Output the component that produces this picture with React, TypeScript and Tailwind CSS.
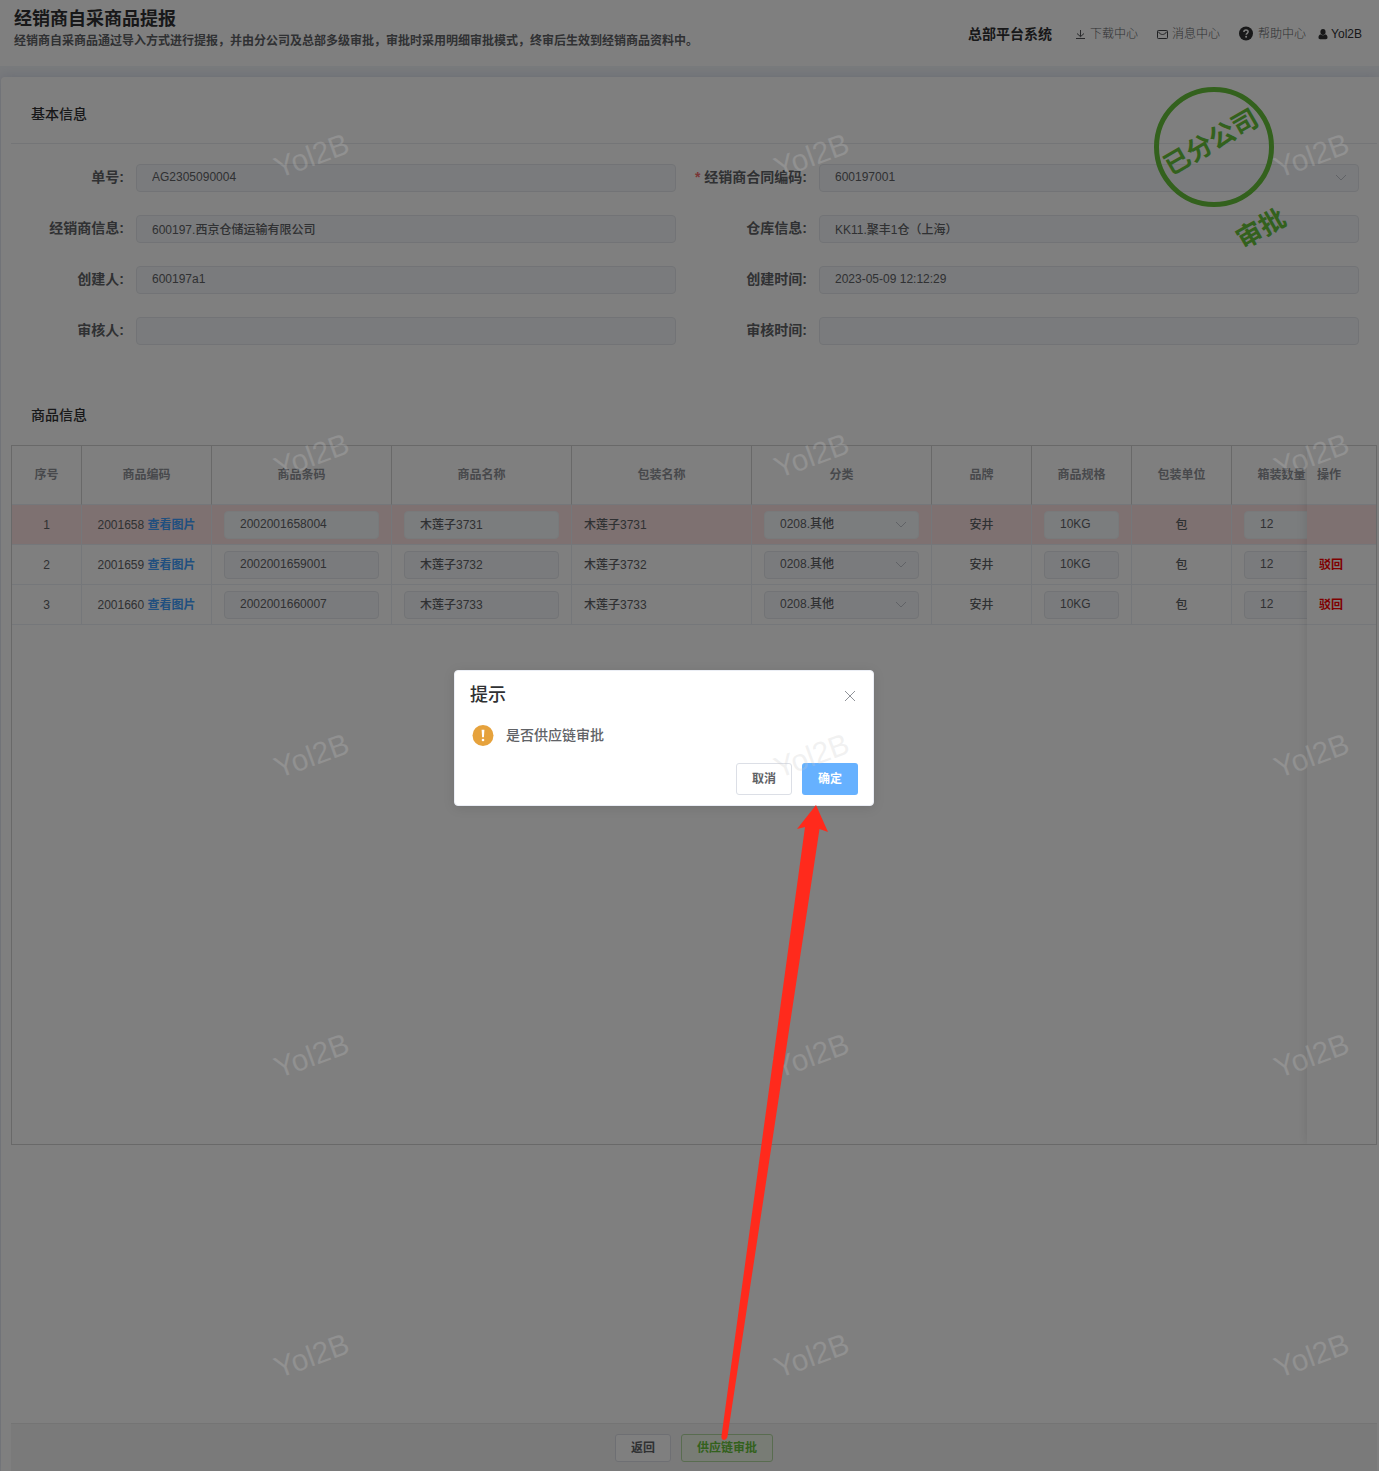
import type { ReactNode } from 'react';

interface FieldProps {
  id: string;
  label: string;
  value: string;
  required?: boolean;
  select?: boolean;
}

interface Product {
  no: number;
  code: string;
  barcode: string;
  name: string;
  category: string;
  brand: string;
  spec: string;
  unit: string;
  boxCount: string;
  rejected: boolean;
}

const fields: FieldProps[] = [
  { id: 'orderNo', label: '单号', value: 'AG2305090004' },
  { id: 'contract', label: '经销商合同编码', value: '600197001', required: true, select: true },
  { id: 'dealer', label: '经销商信息', value: '600197.西京仓储运输有限公司' },
  { id: 'warehouse', label: '仓库信息', value: 'KK11.聚丰1仓（上海）' },
  { id: 'creator', label: '创建人', value: '600197a1' },
  { id: 'createdAt', label: '创建时间', value: '2023-05-09 12:12:29' },
  { id: 'auditor', label: '审核人', value: '' },
  { id: 'auditedAt', label: '审核时间', value: '' },
];

const base = { category: '0208.其他', brand: '安井', spec: '10KG', unit: '包', boxCount: '12' };

const products: Product[] = [
  { ...base, no: 1, code: '2001658', barcode: '2002001658004', name: '木莲子3731', rejected: true },
  { ...base, no: 2, code: '2001659', barcode: '2002001659001', name: '木莲子3732', rejected: false },
  { ...base, no: 3, code: '2001660', barcode: '2002001660007', name: '木莲子3733', rejected: false },
];

const columns = [
  { title: '序号', width: 'w-[70px]' },
  { title: '商品编码', width: 'w-[130px]' },
  { title: '商品条码', width: 'w-[180px]' },
  { title: '商品名称', width: 'w-[180px]' },
  { title: '包装名称', width: 'w-[180px]' },
  { title: '分类', width: 'w-[180px]' },
  { title: '品牌', width: 'w-[100px]' },
  { title: '商品规格', width: 'w-[100px]' },
  { title: '包装单位', width: 'w-[100px]' },
  { title: '箱装数量', width: 'w-[100px]' },
];

function ChevronDown() {
  return (
    <svg
      viewBox="0 0 12 12"
      className="pointer-events-none absolute top-1/2 right-3 h-3 w-3 -translate-y-1/2"
      fill="none"
      stroke="#c0c4cc"
      strokeWidth="1"
    >
      <path d="M1 3 6 8 11 3" />
    </svg>
  );
}

function Field({ id, label, value, required, select }: FieldProps) {
  const control =
    'block h-7 w-full appearance-none rounded border border-[#e4e7ed] bg-[#f5f7fa] px-[15px] pb-0.5 text-xs font-medium text-[#606266]';
  return (
    <div className="flex items-center pr-[18px]">
      <label
        htmlFor={id}
        className="w-[125px] shrink-0 pr-3 pb-0.5 text-right text-sm font-bold whitespace-nowrap text-[#606266]"
      >
        {required && <span className="mr-1 text-[#f56c6c]">*</span>}
        {label}:
      </label>
      <div className="relative min-w-0 flex-1">
        {select ? (
          <>
            <select id={id} className={control} defaultValue={value}>
              <option>{value}</option>
            </select>
            <ChevronDown />
          </>
        ) : (
          <input id={id} className={control} defaultValue={value} readOnly />
        )}
      </div>
    </div>
  );
}

function CellInput({ label, value, active, select }: { label: string; value: string; active: boolean; select?: boolean }) {
  const control = `block h-7 w-full appearance-none rounded border px-[15px] pb-0.5 text-xs font-medium text-[#606266] ${
    active ? 'border-[#f0f4f6] bg-[#f6fafc]' : 'border-[#e4e7ed] bg-[#f5f7fa]'
  }`;
  return (
    <div className="relative">
      {select ? (
        <>
          <select aria-label={label} className={control} defaultValue={value}>
            <option>{value}</option>
          </select>
          <ChevronDown />
        </>
      ) : (
        <input aria-label={label} className={control} defaultValue={value} />
      )}
    </div>
  );
}

function Td({ children, center }: { children?: ReactNode; center?: boolean }) {
  return (
    <td className={`border-r border-b border-[#ebeef5] px-3 whitespace-nowrap ${center ? 'text-center' : ''}`}>
      {children}
    </td>
  );
}

function ProductTable() {
  return (
    <div className="flex h-[700px] border border-[#d2d2d2] text-xs font-medium text-[#606266]">
      <div className="min-w-0 flex-1 overflow-x-auto [scrollbar-width:none]">
        <table className="w-[1320px] table-fixed border-separate border-spacing-0">
          <thead>
            <tr className="h-[59px] text-[#909399]">
              {columns.map((c) => (
                <th key={c.title} className={`${c.width} border-r border-b border-r-[#d2d2d2] border-b-[#ebeef5] font-bold`}>
                  {c.title}
                </th>
              ))}
            </tr>
          </thead>
          <tbody>
            {products.map((p) => (
              <tr key={p.no} className={`h-10 ${p.rejected ? 'bg-[#fde2e2]' : ''}`}>
                <Td center>{p.no}</Td>
                <Td center>
                  {p.code}{' '}
                  <a href="#image" className="font-bold text-[#409eff]">
                    查看图片
                  </a>
                </Td>
                <Td>
                  <CellInput label="商品条码" value={p.barcode} active={p.rejected} />
                </Td>
                <Td>
                  <CellInput label="商品名称" value={p.name} active={p.rejected} />
                </Td>
                <Td>{p.name}</Td>
                <Td>
                  <CellInput label="分类" value={p.category} active={p.rejected} select />
                </Td>
                <Td center>{p.brand}</Td>
                <Td>
                  <CellInput label="商品规格" value={p.spec} active={p.rejected} />
                </Td>
                <Td center>{p.unit}</Td>
                <Td>
                  <CellInput label="箱装数量" value={p.boxCount} active={p.rejected} />
                </Td>
              </tr>
            ))}
          </tbody>
        </table>
      </div>
      <div className="relative w-[69px] shrink-0 bg-white shadow-[0_0_10px_rgba(0,0,0,0.12)] [clip-path:inset(0_0_0_-12px)]">
        <table className="w-full table-fixed border-separate border-spacing-0">
          <thead>
            <tr className="h-[59px] text-[#909399]">
              <th className="border-b border-[#ebeef5] px-2.5 text-left font-bold">操作</th>
            </tr>
          </thead>
          <tbody>
            {products.map((p) => (
              <tr key={p.no} className={`h-10 ${p.rejected ? 'bg-[#fde2e2]' : ''}`}>
                <td className="border-b border-[#ebeef5] px-3">
                  {!p.rejected && (
                    <button type="button" className="font-bold text-[#ff0000]">
                      驳回
                    </button>
                  )}
                </td>
              </tr>
            ))}
          </tbody>
        </table>
      </div>
    </div>
  );
}

function Header() {
  return (
    <header className="flex h-[66px] items-start justify-between bg-white pr-[17px] pl-3.5">
      <div className="pt-2">
        <h1 className="text-lg leading-[22px] font-bold text-[#303133]">经销商自采商品提报</h1>
        <p className="text-xs leading-[22px] font-bold text-[#606266]">
          经销商自采商品通过导入方式进行提报，并由分公司及总部多级审批，审批时采用明细审批模式，终审后生效到经销商品资料中。
        </p>
      </div>
      <nav className="flex items-center pt-6 text-xs leading-5 font-light text-[#606266]">
        <strong className="mr-[22px] text-sm leading-5 font-bold text-[#303133]">总部平台系统</strong>
        <a href="#download" className="mr-[18px] flex items-center gap-1">
          <svg viewBox="0 0 12 12" className="h-3 w-3" fill="none" stroke="#505256" strokeWidth="1">
            <path d="M6.500 2v6.500M3 5.500 6.500 8.700 10 5.500M2 10.500h9" />
          </svg>
          下载中心
        </a>
        <a href="#message" className="mr-[18px] flex items-center gap-1">
          <svg viewBox="0 0 12 12" className="h-3 w-3" fill="none" stroke="#404246" strokeWidth="1">
            <rect x="1.5" y="2.5" width="10" height="8" rx="0.8" />
            <path d="M2 3.500C3.500 5.500 5 6.500 6.500 6.500S9.500 5.500 11 3.500" />
          </svg>
          消息中心
        </a>
        <a href="#help" className="mr-3 flex items-center gap-1">
          <svg viewBox="0 0 16 16" className="h-4 w-4">
            <circle cx="8" cy="7.5" r="7" fill="#303133" />
            <path
              d="M5.900 6c0-1.300.9-2.100 2.100-2.100s2.100.8 2.100 1.900c0 1.500-1.900 1.500-1.900 3"
              fill="none"
              stroke="#fff"
              strokeWidth="1.5"
            />
            <circle cx="8.1" cy="10.8" r="1" fill="#fff" />
          </svg>
          帮助中心
        </a>
        <a href="#user" className="flex items-center gap-[3px] font-normal text-[#303133]">
          <svg viewBox="0 0 10 12" className="h-3 w-2.5" fill="#303133">
            <ellipse cx="5" cy="4" rx="2.6" ry="3" />
            <path d="M2.600 6.200C1.200 6.600.5 7.800.5 9.500c0 1 .6 1.700 1.600 1.700h5.800c1 0 1.600-.7 1.600-1.700 0-1.700-.7-2.900-2.100-3.300C6.700 7.600 3.300 7.600 2.600 6.200Z" />
          </svg>
          Yol2B
        </a>
      </nav>
    </header>
  );
}

function Stamp() {
  return (
    <div className="absolute top-[10px] right-[105px] h-[120px] w-[120px] rounded-full border-[5px] border-[#67c23a]">
      <p className="absolute top-0 -left-2 w-[120px] -rotate-[30deg] text-center text-[26px] leading-[100px] font-bold text-[#67c23a]">
        已分公司
        <span className="absolute top-[100px] left-0 w-full">审批</span>
      </p>
    </div>
  );
}

function Watermark() {
  return (
    <div aria-hidden="true" className="pointer-events-none absolute inset-0 z-30 overflow-hidden">
      <div className="grid w-[1500px] grid-cols-3">
        {Array.from({ length: 15 }, (_, i) => (
          <div key={i} className="flex h-[300px] items-center justify-center pt-3 pl-[124px]">
            <span className="-rotate-20 text-[30px] leading-none text-[#c8c8c8]/25">Yol2B</span>
          </div>
        ))}
      </div>
    </div>
  );
}

function ConfirmDialog() {
  return (
    <div className="absolute inset-0 z-20 flex items-center justify-center bg-black/50 pt-[5px] pr-[51px]">
      <div
        role="dialog"
        aria-labelledby="dialog-title"
        className="w-[420px] rounded border border-[#ebeef5] bg-white px-[15px] pb-2.5 shadow-[0_2px_12px_rgba(0,0,0,0.1)]"
      >
        <div className="flex items-center justify-between pt-3">
          <h2 id="dialog-title" className="text-lg leading-6 font-medium text-[#303133]">
            提示
          </h2>
          <button type="button" aria-label="关闭" className="mt-0.5 mr-0.5">
            <svg viewBox="0 0 12 12" className="h-3 w-3" fill="none" stroke="#909399" strokeWidth="1">
              <path d="M1 1 11 11M11 1 1 11" />
            </svg>
          </button>
        </div>
        <div className="flex items-center gap-3 pt-4">
          <svg viewBox="0 0 24 24" className="h-6 w-6">
            <circle cx="13" cy="12.5" r="10.5" fill="#e6a23c" />
            <path d="M11.600 6.800h2.800l-.5 7.500h-1.800z" fill="#fff" />
            <circle cx="13" cy="17" r="1.3" fill="#fff" />
          </svg>
          <p className="text-sm leading-6 font-medium text-[#606266]">是否供应链审批</p>
        </div>
        <div className="flex justify-end gap-2.5 pt-4 text-xs font-bold">
          <button type="button" className="h-8 w-14 rounded-[3px] border border-[#dcdfe6] bg-white text-[#606266]">
            取消
          </button>
          <button type="button" className="h-8 w-14 rounded-[3px] bg-[#66b1ff] text-white">
            确定
          </button>
        </div>
      </div>
    </div>
  );
}

// Points from the approve button in the footer up to the confirm button.
function GuideArrow() {
  return (
    <svg
      viewBox="0 0 110 636"
      className="pointer-events-none absolute bottom-[30px] left-1/2 z-40 h-[636px] w-[110px] translate-x-[30px]"
      fill="#ff2a1c"
    >
      <path d="M96 0 108 27 99.500 24 7.500 631.500Q6.500 635 3.500 635 1 634.500 1.500 631L85 22 77 24Z" />
    </svg>
  );
}

export default function App() {
  return (
    <div className="relative flex min-h-screen flex-col overflow-hidden bg-[#f2f5f9] font-['Liberation_Sans','Noto_Sans_CJK_SC',sans-serif]">
      <Header />
      <main className="relative mt-[11px] ml-px flex flex-1 flex-col rounded-tl bg-white pr-0.5 pl-2.5 shadow-[0_0_12px_rgba(140,150,200,0.3)]">
        <h2 className="flex h-[67px] items-center border-b border-[#e8eaee] px-5 pt-2 text-sm font-medium text-[#303133]">
          基本信息
        </h2>
        <form className="mt-5 grid grid-cols-2 gap-y-[23px]">
          {fields.map((f) => (
            <Field key={f.id} {...f} />
          ))}
        </form>
        <h2 className="mt-10 flex h-[60px] items-center px-5 text-sm font-medium text-[#303133]">商品信息</h2>
        <ProductTable />
        <Stamp />
        <footer className="mt-auto flex h-12 items-center justify-center gap-2.5 border-t border-[#e8e8e8] bg-[#f5f5f5] text-xs font-bold">
          <button type="button" className="h-7 w-14 rounded-[3px] border border-[#dcdfe6] bg-white text-[#606266]">
            返回
          </button>
          <button type="button" className="h-7 rounded-[3px] border border-[#b3d8a0] bg-[#f0f9eb] px-[15px] text-[#67c23a]">
            供应链审批
          </button>
        </footer>
      </main>
      <ConfirmDialog />
      <Watermark />
      <GuideArrow />
    </div>
  );
}
